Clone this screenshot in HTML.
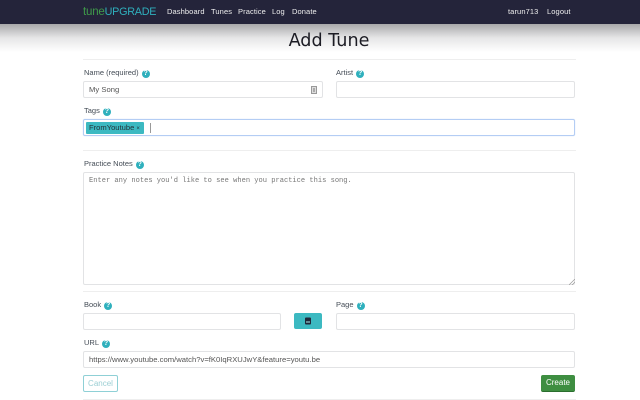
<!DOCTYPE html>
<html><head><meta charset="utf-8"><style>
html,body{margin:0;padding:0;width:640px;height:400px;overflow:hidden;background:#fff}
body{font-family:"Liberation Sans","DejaVu Sans",sans-serif;position:relative;color:#3a3a4a}
.a{position:absolute;white-space:nowrap}
.nav{left:0;top:0;width:640px;height:24px;background:#24243a}
.grad{left:0;top:24px;width:640px;height:28px;background:linear-gradient(#a8a8aa,#e6e6e7 50%,#fff)}
.n{top:7px;font-size:7.5px;line-height:10px;color:#eee;letter-spacing:.1px}
.hr{left:83px;width:493px;height:1px;background:#eeeeee}
.l{font-size:7.5px;line-height:10px;color:#444c56;margin-top:.5px}
.i{box-sizing:border-box;background:#fff;border:1px solid #e2e3e5;border-radius:2px;height:17px;font-size:7.67px;line-height:15px;padding-left:5px;color:#555}
.q{display:inline-block;width:8px;height:8px;border-radius:50%;background:#2fb0bd;color:#fff;font:bold 7px/8px "Liberation Sans",sans-serif;text-align:center;margin-left:3px;vertical-align:0}
</style></head><body>
<div class="a grad"></div>
<div class="a nav"></div>
<div class="a" style="left:83px;top:6px;font:11.5px/13px 'Liberation Sans',sans-serif;letter-spacing:-.2px"><span style="color:#3f9a4a">tune</span><span style="color:#2fb0bd;font-size:10.8px;letter-spacing:-.25px">UPGRADE</span></div>
<div class="a n" style="left:167px">Dashboard</div>
<div class="a n" style="left:211px">Tunes</div>
<div class="a n" style="left:238px">Practice</div>
<div class="a n" style="left:272px">Log</div>
<div class="a n" style="left:292px">Donate</div>
<div class="a n" style="left:508px">tarun713</div>
<div class="a n" style="left:547px">Logout</div>
<div class="a" style="left:209px;width:240px;top:30px;text-align:center;font-family:'DejaVu Sans',sans-serif;font-size:17.6px;line-height:23px;color:#1c1c24">Add Tune</div>
<div class="a hr" style="top:59px"></div>
<div class="a l" style="left:84px;top:67px">Name (required)<span class="q">?</span></div>
<div class="a i" style="left:83px;top:81px;width:240px">My Song</div>
<svg class="a" style="left:311px;top:86px" width="6" height="8"><rect x=".5" y=".5" width="5" height="7" fill="#ddd" stroke="#999"/><path d="M2 3h2M2 5h2" stroke="#777"/></svg>
<div class="a l" style="left:336px;top:67px">Artist<span class="q">?</span></div>
<div class="a i" style="left:336px;top:81px;width:239px"></div>
<div class="a l" style="left:84px;top:105px">Tags<span class="q">?</span></div>
<div class="a i" style="left:83px;top:119px;width:492px;border-color:#b4cdf4;box-shadow:0 0 1px #c5d8f8"></div>
<div class="a" style="left:86px;top:122px;width:58px;height:12px;background:#3cb9c1;border-radius:1px;font-size:7.6px;line-height:12px;color:#24343a;text-indent:3px">FromYoutube <span style="font-size:6px">×</span></div>
<div class="a" style="left:150px;top:123px;width:1px;height:10px;background:#999"></div>
<div class="a hr" style="top:150px"></div>
<div class="a l" style="left:84px;top:158px">Practice Notes<span class="q">?</span></div>
<div class="a i" style="left:83px;top:172px;width:492px;height:113px;font:7.07px/15px 'Liberation Mono',monospace;color:#777;padding-top:1px">Enter any notes you'd like to see when you practice this song.</div>
<svg class="a" style="left:569px;top:279px" width="6" height="6"><path d="M0 6L6 0M3 6L6 3" stroke="#999" stroke-width=".7"/></svg>
<div class="a hr" style="top:291px"></div>
<div class="a l" style="left:84px;top:299px">Book<span class="q">?</span></div>
<div class="a i" style="left:83px;top:313px;width:198px"></div>
<div class="a" style="left:294px;top:313px;width:28px;height:16px;background:#3cb9c1;border-radius:2px"></div>
<svg class="a" style="left:305px;top:317px" width="6" height="8"><rect width="6" height="7" y=".5" rx="1" fill="#20283a"/><path d="M1 5h4" stroke="#aee"/></svg>
<div class="a l" style="left:336px;top:299px">Page<span class="q">?</span></div>
<div class="a i" style="left:336px;top:313px;width:239px"></div>
<div class="a l" style="left:84px;top:337px">URL<span class="q">?</span></div>
<div class="a i" style="left:83px;top:351px;width:492px">https://www.youtube.com/watch?v=fK0IqRXUJwY&amp;feature=youtu.be</div>
<div class="a" style="box-sizing:border-box;left:83px;top:375px;width:35px;height:17px;border:1px solid #8fd0d6;border-radius:2px;font-size:8px;line-height:15px;text-align:center;color:#9ccfd4">Cancel</div>
<div class="a" style="left:541px;top:375px;width:34px;height:17px;background:#3e8e41;border-radius:2px;border-bottom:1px solid #2a6e2e;box-sizing:border-box;font-size:8px;line-height:16px;text-align:center;color:#fff">Create</div>
<div class="a hr" style="top:399px"></div>
</body></html>
